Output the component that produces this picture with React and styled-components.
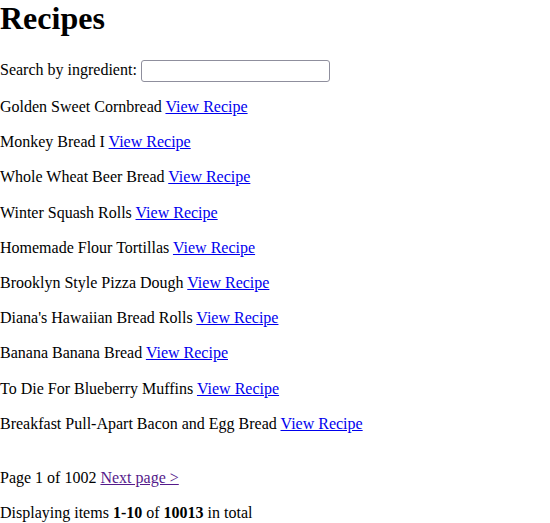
import React from "react";
import styled, { createGlobalStyle } from "styled-components";

const Global = createGlobalStyle`
  html, body { margin: 0; padding: 0; background: #fff; }
  body { font-family: "Liberation Serif", "Times New Roman", serif; font-size: 16px; color: #000; }
`;

const Page = styled.div`
  display: flex;
  flex-direction: column;
`;

const Title = styled.h1`
  font-size: 32px;
  font-weight: bold;
  line-height: 37px;
  margin: 0;
`;

const SearchRow = styled.form`
  display: flex;
  align-items: flex-start;
  gap: 4px;
  margin: 23px 0 0;
  height: 22px;
  line-height: 19px;
`;

const SearchInput = styled.input`
  box-sizing: border-box;
  width: 189px;
  height: 22px;
  border: 1px solid #8f8f9d;
  border-radius: 3px;
  padding: 1px 4px;
  font: 13px "Liberation Sans", Arial, sans-serif;
  background: #fff;
`;

const List = styled.div`
  display: flex;
  flex-direction: column;
  margin-top: 15px;
`;

const Row = styled.p`
  margin: 0;
  line-height: 19.2px;
  height: 19.2px;
  & + & { margin-top: 16px; }
`;

const Link = styled.a`
  color: ${(p) => (p.$visited ? "#551a8b" : "#0000ee")};
  text-decoration: underline;
  cursor: pointer;
`;

const Pager = styled.p`
  margin: 35px 0 0;
  line-height: 19.2px;
`;

const Summary = styled.p`
  margin: 16px 0 0;
  line-height: 19.2px;
`;

const recipes = [
  "Golden Sweet Cornbread",
  "Monkey Bread I",
  "Whole Wheat Beer Bread",
  "Winter Squash Rolls",
  "Homemade Flour Tortillas",
  "Brooklyn Style Pizza Dough",
  "Diana's Hawaiian Bread Rolls",
  "Banana Banana Bread",
  "To Die For Blueberry Muffins",
  "Breakfast Pull-Apart Bacon and Egg Bread",
];

export default function App() {
  return (
    <Page>
      <Global />
      <Title>Recipes</Title>
      <SearchRow onSubmit={(e) => e.preventDefault()}>
        <label htmlFor="q">Search by ingredient:</label>
        <SearchInput id="q" type="text" />
      </SearchRow>
      <List>
        {recipes.map((r) => (
          <Row key={r}>
            {r} <Link href="#">View Recipe</Link>
          </Row>
        ))}
      </List>
      <Pager>
        Page 1 of 1002 <Link $visited href="#">Next page &gt;</Link>
      </Pager>
      <Summary>
        Displaying items <b>1-10</b> of <b>10013</b> in total
      </Summary>
    </Page>
  );
}
